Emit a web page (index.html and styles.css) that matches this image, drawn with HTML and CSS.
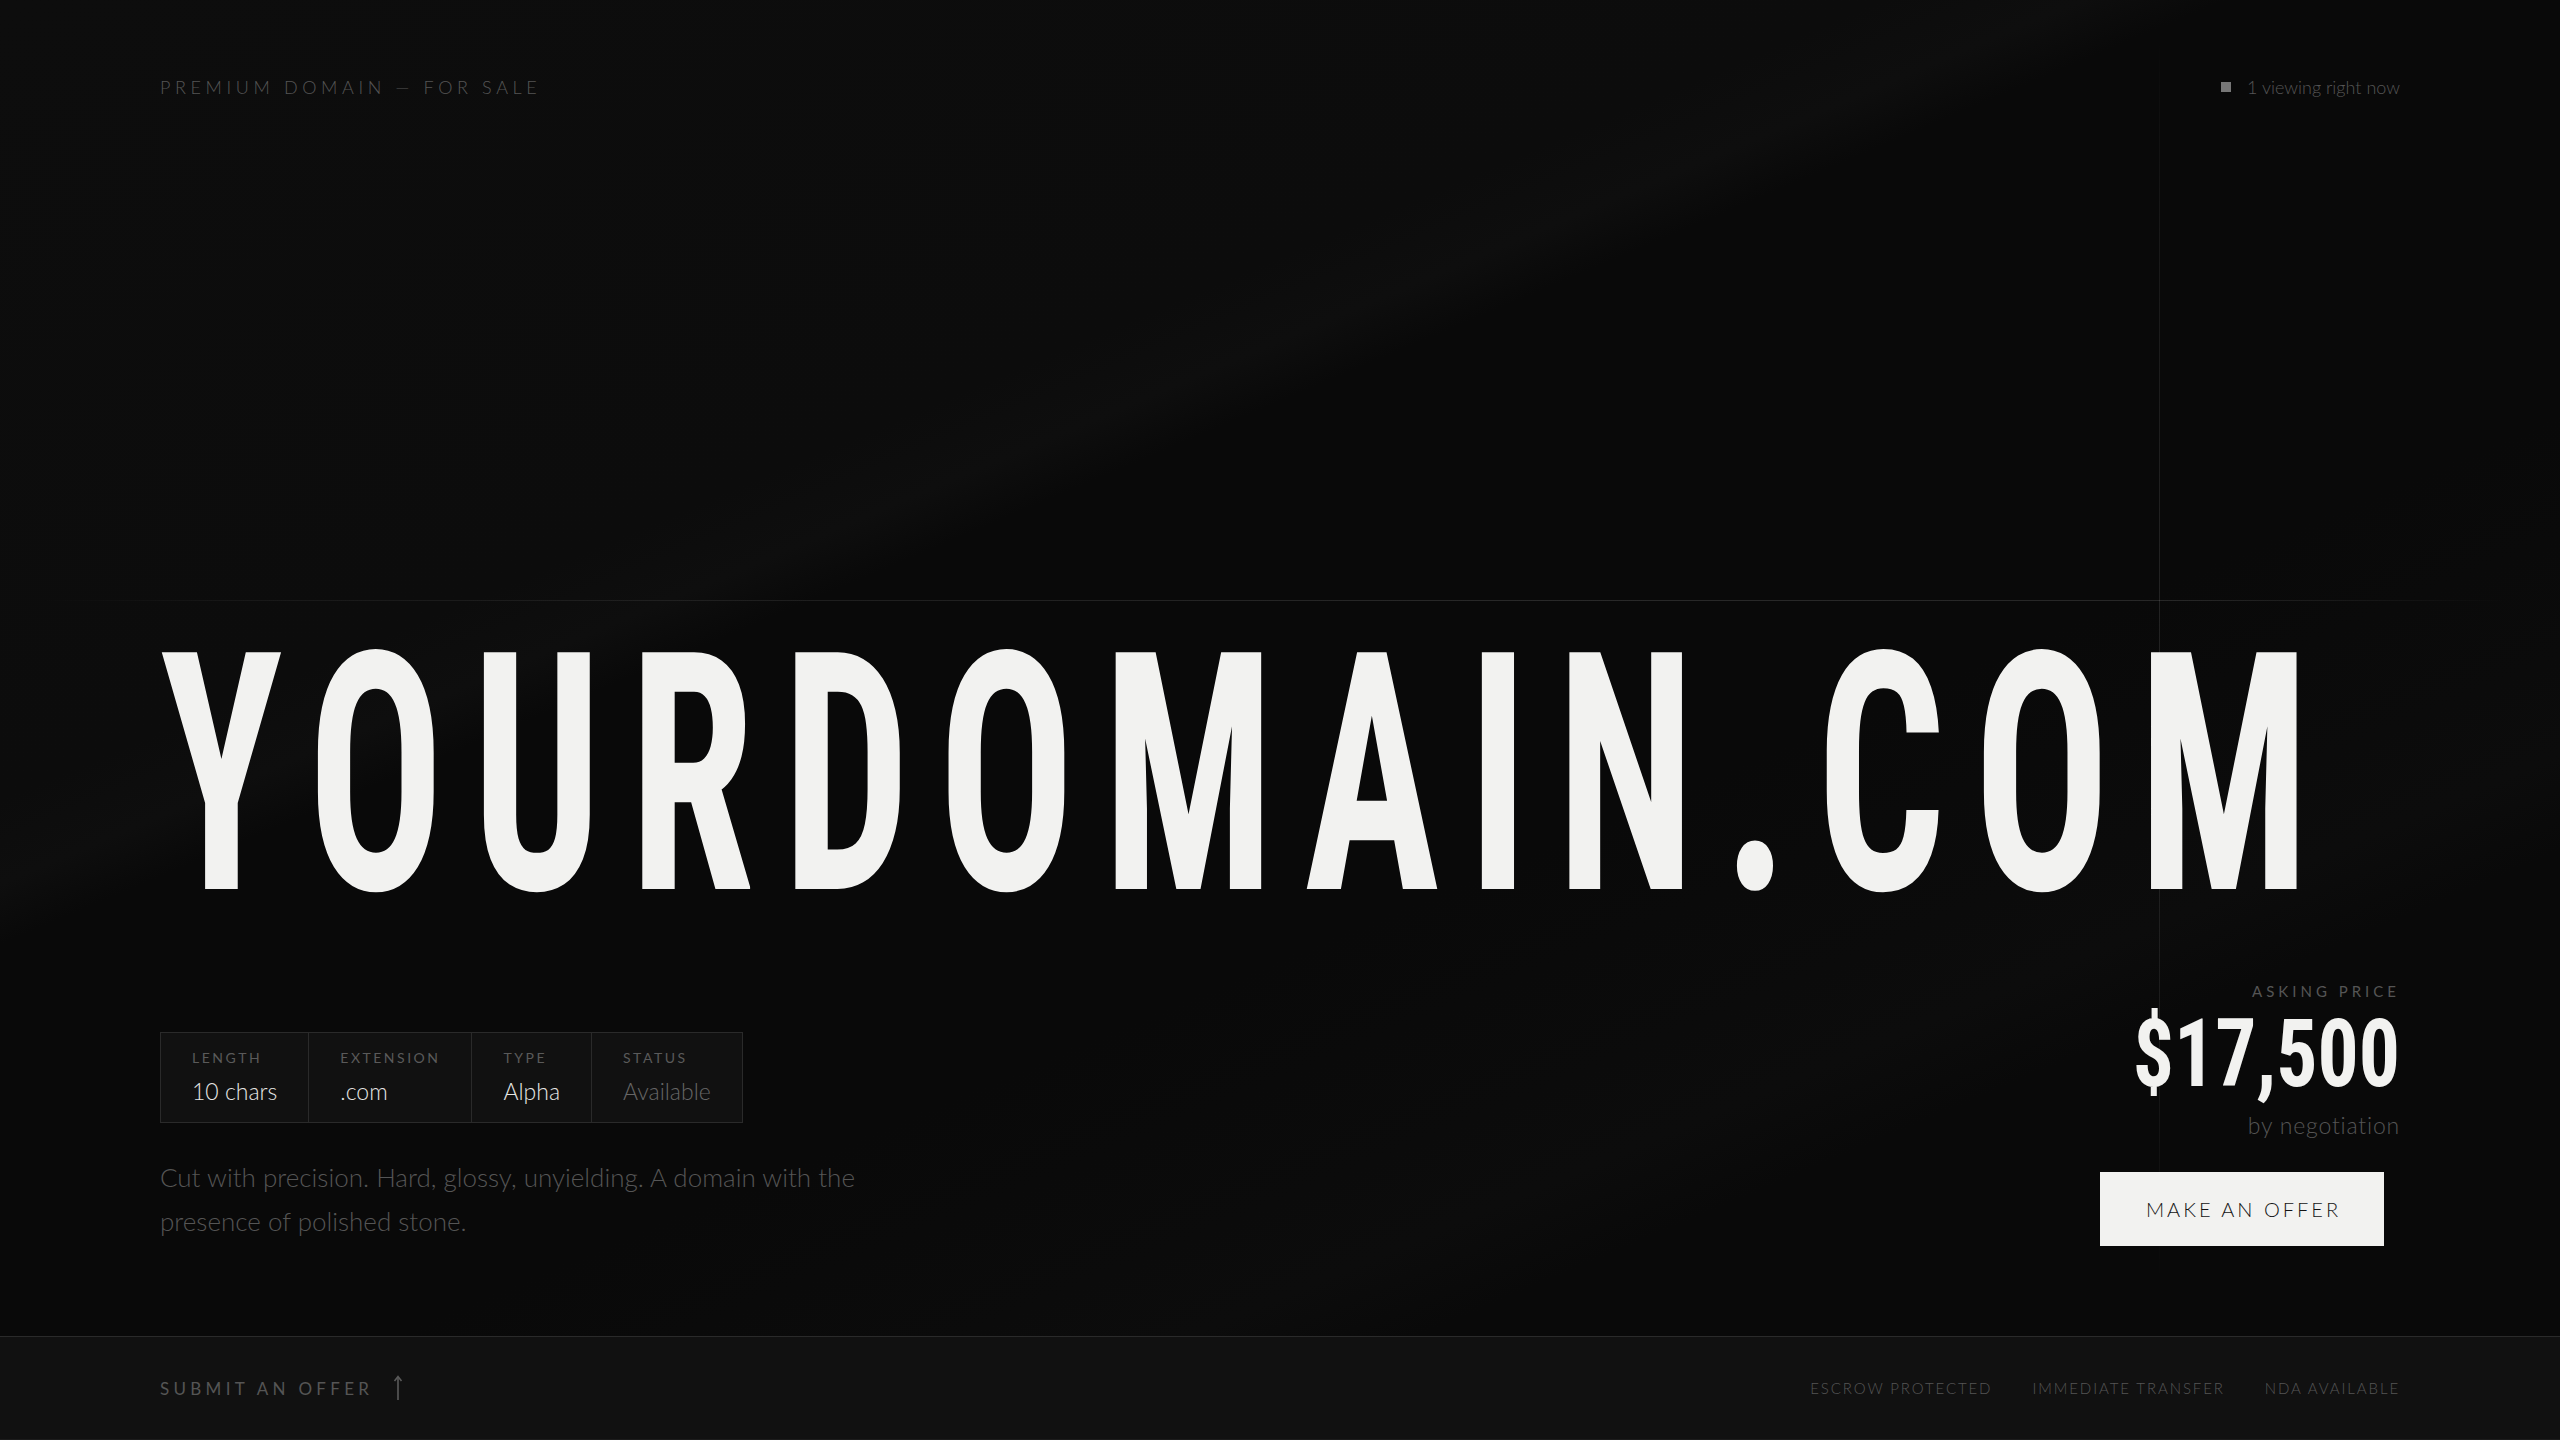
FILE: index.html
```html
<!DOCTYPE html>
<html lang="en">
<head>
<meta charset="utf-8">
<title>yourdomain.com — Premium Domain For Sale</title>
<link rel="stylesheet" href="styles.css">
</head>
<body>
<div class="page">
  <main class="main">
    <div class="hline"></div>
    <div class="vline"></div>
    <header class="topbar">
      <div class="eyebrow">PREMIUM DOMAIN — FOR SALE</div>
      <div class="live"><span class="live-dot"></span><span>1 viewing right now</span></div>
    </header>

    <h1 class="domain"><span class="domain-text">YOURDOMAIN.COM</span></h1>

    <section class="bottom">
      <div class="info">
        <div class="specs">
          <div class="spec">
            <div class="spec-label">LENGTH</div>
            <div class="spec-value">10 chars</div>
          </div>
          <div class="spec">
            <div class="spec-label">EXTENSION</div>
            <div class="spec-value">.com</div>
          </div>
          <div class="spec">
            <div class="spec-label">TYPE</div>
            <div class="spec-value">Alpha</div>
          </div>
          <div class="spec">
            <div class="spec-label">STATUS</div>
            <div class="spec-value muted">Available</div>
          </div>
        </div>
        <p class="desc">Cut with precision. Hard, glossy, unyielding. A domain with the presence of polished stone.</p>
      </div>

      <div class="price">
        <div class="price-label">ASKING PRICE</div>
        <div class="price-value"><span class="price-num">$17,500</span></div>
        <div class="price-note">by negotiation</div>
        <button class="offer-btn">MAKE AN OFFER</button>
      </div>
    </section>
  </main>

  <footer class="footer">
    <div class="submit">
      <span>SUBMIT AN OFFER</span>
      <svg class="arrow" width="10" height="26" viewBox="0 0 10 26" fill="none">
        <path d="M5 25 V2" stroke="#5a5a5a" stroke-width="1.6"/>
        <path d="M1.5 6 L5 1.5 L8.5 6" stroke="#5a5a5a" stroke-width="1.6" fill="none"/>
      </svg>
    </div>
    <nav class="perks">
      <span>ESCROW PROTECTED</span>
      <span>IMMEDIATE TRANSFER</span>
      <span>NDA AVAILABLE</span>
    </nav>
  </footer>
</div>
</body>
</html>
```

FILE: styles.css
```css
* { box-sizing: border-box; }

html, body {
  margin: 0;
  padding: 0;
}

body {
  background: #0a0a0a;
  font-family: "Lato", "Noto Sans", sans-serif;
  font-weight: 300;
  color: #555;
}

.page {
  width: 2560px;
  height: 1440px;
  display: flex;
  flex-direction: column;
  overflow: hidden;
}

.main {
  position: relative;
  flex: 1;
  display: flex;
  flex-direction: column;
  padding: 76px 160px 90px;
  background:
    linear-gradient(157deg,
      #0d0d0d 0%,
      #0c0c0c 33%,
      #0e0e0e 36.5%,
      #090909 39%,
      #090909 62%,
      #0b0b0b 72%,
      #0c0c0c 76%,
      #090909 80%,
      #090909 100%);
}

.hline {
  position: absolute;
  left: 0;
  right: 0;
  top: 600px;
  height: 1px;
  background: linear-gradient(90deg,
    rgba(255,255,255,0) 1.5%,
    rgba(255,255,255,0.05) 10%,
    rgba(255,255,255,0.09) 35%,
    rgba(255,255,255,0.13) 60%,
    rgba(255,255,255,0.12) 85%,
    rgba(255,255,255,0) 98%);
}

.vline {
  position: absolute;
  top: 40px;
  bottom: 56px;
  right: 400px;
  width: 1px;
  background: linear-gradient(180deg,
    rgba(255,255,255,0) 0%,
    rgba(255,255,255,0.06) 15%,
    rgba(255,255,255,0.1) 45%,
    rgba(255,255,255,0.07) 80%,
    rgba(255,255,255,0) 100%);
}

.topbar {
  position: relative;
  display: flex;
  justify-content: space-between;
  align-items: center;
  height: 22px;
}

.eyebrow {
  font-size: 18px;
  letter-spacing: 4.6px;
  color: #555;
  font-weight: 300;
}

.live {
  display: flex;
  align-items: center;
  gap: 16px;
  font-size: 18px;
  color: #555;
}

.live-dot {
  width: 10px;
  height: 10px;
  background: #777;
}

.domain {
  position: relative;
  margin: 511px 0 0;
  font-family: "Roboto Condensed", "Liberation Sans Narrow", "DejaVu Sans Condensed", sans-serif;
  font-weight: 700;
  font-size: 333px;
  line-height: 1;
  letter-spacing: 41px;
  color: #f2f2f0;
  white-space: nowrap;
}

.domain-text {
  display: inline-block;
  transform: scaleX(0.68);
  transform-origin: left center;
}

.bottom {
  position: relative;
  margin-top: auto;
  display: flex;
  justify-content: space-between;
  align-items: flex-end;
}

.info {
  display: flex;
  flex-direction: column;
  padding-bottom: 3px;
}

.specs {
  display: flex;
  align-self: flex-start;
  border: 1px solid #2a2a2a;
  background: #111;
}

.spec {
  padding: 17px 31px;
  border-left: 1px solid #2a2a2a;
}

.spec:first-child { border-left: none; }

.spec-label {
  font-size: 14px;
  line-height: 16px;
  letter-spacing: 2.5px;
  color: #5a5a5a;
  font-weight: 400;
}

.spec-value {
  margin-top: 11px;
  font-size: 23px;
  line-height: 28px;
  color: #e6e6e4;
}

.spec-value.muted { color: #666; }

.desc {
  margin: 32px 0 0;
  max-width: 720px;
  font-size: 26px;
  line-height: 44px;
  color: #555;
}

.price {
  display: flex;
  flex-direction: column;
  align-items: flex-end;
  text-align: right;
}

.price-label {
  font-size: 15px;
  line-height: 18px;
  letter-spacing: 4px;
  color: #555;
  font-weight: 400;
}

.price-value {
  margin-top: 7px;
  font-family: "Roboto Condensed", "Liberation Sans Narrow", "DejaVu Sans Condensed", sans-serif;
  font-weight: 700;
  font-size: 94px;
  line-height: 1;
  color: #f2f2f0;
}

.price-num {
  display: inline-block;
  transform: scaleX(0.868);
  transform-origin: right center;
}

.price-note {
  margin-top: 9px;
  font-size: 23px;
  line-height: 30px;
  letter-spacing: 0.8px;
  color: #555;
}

.offer-btn {
  margin-top: 32px;
  margin-right: 16px;
  width: 284px;
  height: 74px;
  border: none;
  background: #f2f2f0;
  color: #141414;
  font-family: "Lato", "Noto Sans", sans-serif;
  font-weight: 300;
  font-size: 20px;
  letter-spacing: 3px;
  padding: 0 0 0 3px;
  cursor: pointer;
}

.footer {
  height: 104px;
  flex: none;
  border-top: 1px solid #2a2a2a;
  border-bottom: 1px solid #1c1c1c;
  background: #111;
  display: flex;
  align-items: center;
  justify-content: space-between;
  padding: 0 160px;
}

.submit {
  display: flex;
  align-items: center;
  gap: 20px;
  font-size: 17px;
  letter-spacing: 4.3px;
  color: #555;
  font-weight: 400;
}

.arrow { display: block; }

.perks {
  display: flex;
  gap: 40px;
  font-size: 15px;
  letter-spacing: 1.9px;
  color: #555;
  font-weight: 300;
}
```
